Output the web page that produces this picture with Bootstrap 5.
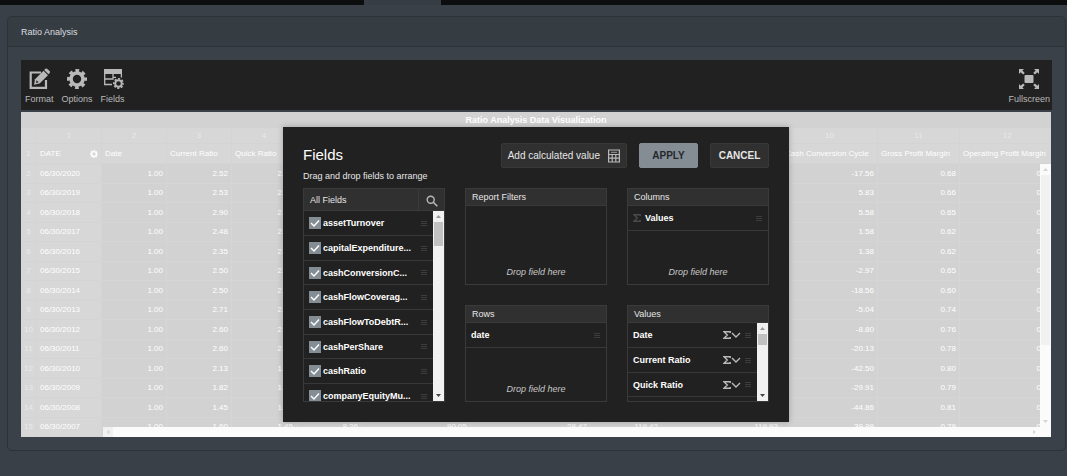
<!DOCTYPE html>
<html lang="en">
<head>
<meta charset="utf-8">
<meta name="viewport" content="width=device-width, initial-scale=1">
<title>Ratio Analysis</title>
<link href="https://cdn.jsdelivr.net/npm/bootstrap@5.3.0/dist/css/bootstrap.min.css" rel="stylesheet">
<style>
:root{--ink:#212121;--line:#3a3a3a;--head:#303030}
body{background:#3a4047;font-family:"Liberation Sans",Arial,sans-serif;font-size:9px;line-height:12px;color:#ddd;overflow:hidden}
button{font-family:inherit}
.topbar{height:5px;background:#0b0d0f}
.topbar a{display:block;width:77px;height:5px;margin-left:364px;background:#363d45}
.report{margin:11px 1px 0 7px;background:#3a4149;border:1px solid #2b3238;border-radius:5px;color:inherit}
.report>.card-header{background:#353c42;border-bottom:1px solid #2b3238;padding:9px 13px;height:30px}
.report>.card-header h1{font-size:9px;line-height:12px;margin:0;font-weight:400;color:#dcdee0}
.report>.card-body{padding:13px}
.tools{background:var(--ink);height:50px;padding:7px 2px 0 4px}
.tool-set{gap:8px}
.tool{background:none;border:0;padding:0;color:#b9b9b9;font-size:9px;line-height:12px;display:flex;flex-direction:column;align-items:center;gap:2px}
.tool svg{width:24px;height:24px}
.pivot{margin:2px 1px 0 0;height:325px;background:#d2d2d2;color:#fff;overflow:hidden}
.caption-row{height:16px;line-height:16px;font-size:9px;font-weight:700;text-align:center}
.sheet{table-layout:fixed;border-collapse:separate;border-spacing:0;width:1035px;font-size:8px;line-height:10px}
.sheet th,.sheet td{padding:0 3px;height:20px;border-right:1px solid #d6d6d6;border-bottom:1px solid #d5d5d5;white-space:nowrap;overflow:hidden;font-weight:400;vertical-align:middle;color:#fff}
.sheet td{text-align:right}
.sheet tbody tr:nth-child(even)>*{height:19px}
.sheet th{background:#d7d7d7;border-color:#d4d4d4}
.sheet .idx th{height:16px;text-align:center;color:#eaeaea}
.sheet th:first-child{text-align:center;color:#eaeaea}
.vbar{position:absolute;right:0;top:52px;bottom:10px;width:11px;background:#fbfbfb}
.hbar{position:absolute;left:82px;right:0;bottom:0;height:10px;background:#fbfbfb}
.pale{background:#f1f1f1}
.bar-col{width:11px;background:#f1f1f1;flex:none}
.bar-col svg{display:block;width:11px;height:11px}
.thumb{width:9px;margin:0 1px;background:#c1c1c1}
.dlg{position:absolute;top:67px;left:0;right:1px;margin:0 auto;width:506px;height:295px;padding:16px 20px 0;background:var(--ink);box-shadow:0 0 6px rgba(0,0,0,.25);color:#e6e6e6}
.dlg h2{font-size:15px;line-height:18px;font-weight:400;color:#fff;margin:3px 0 0}
.dlg-btn{height:25px;border:1px solid #383838;border-radius:2px;background:var(--head);color:#e6e6e6;font-size:10px;line-height:12px;padding:0 6px;white-space:nowrap}
.w-action{width:59px;padding:0;font-weight:700}
.dlg-btn.go{background:#858d94;border-color:#858d94;color:#24282c}
.btn-set{gap:12px}
.trio{display:grid;grid-template-columns:repeat(3,1fr);gap:20px}
.duo{display:grid;gap:20px}
.pane{border:1px solid var(--line);display:flex;flex-direction:column;overflow:hidden}
.pane-title{background:var(--head);height:17px;line-height:16px;padding:0 6px;border-bottom:1px solid var(--line);flex:none;font-size:9px;font-weight:400;margin:0}
.tall{height:97px}
.pane.all{height:214px}
.all .pane-title{height:22px;line-height:22px;padding:0;display:flex}
.all .pane-title span{flex:1;padding-left:6px}
.all .pane-title button{width:26px;border:0;border-left:1px solid var(--line);background:none;padding:0;color:#b9b9b9}
.rows{list-style:none;margin:0;padding:0;overflow:hidden;flex:1}
.rows.short{flex:none}
.rows li{height:25px;border-bottom:1px solid #383838;display:flex;align-items:center;padding:0 6px 0 5px;color:#fff;font-weight:700}
.rows li:nth-child(3n){height:24px}
.rows label{display:flex;align-items:center;gap:2px}
.tick{appearance:none;width:12px;height:12px;margin:0;background:#858d94 url("data:image/svg+xml,%3Csvg xmlns='http://www.w3.org/2000/svg' viewBox='0 0 12 12'%3E%3Cpath d='M2 6l3 3 5-5.5' fill='none' stroke='%23fff' stroke-width='1.4'/%3E%3C/svg%3E")}
.grip{margin-left:auto;width:6px;height:5px;flex:none;color:#3c3c3c}
.hint{margin:auto auto 6px;font-style:italic;color:#c8c8c8}
</style>
</head>
<body>
<nav class="topbar" aria-label="Main"><a href="#" aria-label="Current section"></a></nav>
<svg class="d-none">
  <symbol id="up" viewBox="0 0 11 11"><path d="M3 7l2.5-3L8 7z" fill="currentColor"/></symbol>
  <symbol id="down" viewBox="0 0 11 11"><path d="M3 4l2.5 3L8 4z" fill="currentColor"/></symbol>
  <symbol id="grip" viewBox="0 0 6 5"><path d="M0 .5h6M0 2.5h6M0 4.5h6" stroke="currentColor"/></symbol>
  <symbol id="sigma" viewBox="0 0 8 8"><path d="M7.2 2V.8H1L4.3 4 1 7.2h6.2V6" fill="none" stroke="currentColor" stroke-width="1.4"/></symbol>
  <symbol id="chev" viewBox="0 0 10 8"><path d="M1 2l4 4 4-4" fill="none" stroke="currentColor" stroke-width="1.4"/></symbol>
  <symbol id="cog" viewBox="0 0 20 20"><g fill="none" stroke="currentColor"><circle cx="10" cy="10" r="6" stroke-width="3.6"/><circle cx="10" cy="10" r="8.5" stroke-width="3" stroke-dasharray="3.7 2.976" stroke-dashoffset="1.85"/></g></symbol>
</svg>
<main class="card report">
  <header class="card-header"><h1>Ratio Analysis</h1></header>
  <div class="card-body">
    <div class="position-relative">
      <div class="tools d-flex justify-content-between">
        <div class="d-flex tool-set">
          <button class="tool"><svg viewBox="0 0 24 24"><path d="M14 5.500H3.700v15.300h15.300V13" fill="none" stroke="currentColor" stroke-width="2.200"/><path d="M7 17.800l1-5.600L16.500 3.700l4.500 4.500-8.400 8.400z" fill="currentColor"/><path d="M17.200 3l1.200-1.200q1-.8 2 .1l2.200 2.200q.9 1 .1 2l-1.200 1.200z" fill="currentColor"/><path d="M9 15.900l.6-2.700 2.100 2.100z" fill="#212121"/></svg>Format</button>
          <button class="tool"><svg viewBox="-2 -2 24 24"><use href="#cog" width="20" height="20"/></svg>Options</button>
          <button class="tool"><svg viewBox="0 0 24 24"><path d="M3 2h18v5H3z" fill="currentColor"/><path d="M3.700 7v10.500H11M3.700 12H12V7M20.400 7v3.500M12 10.300h3" fill="none" stroke="currentColor" stroke-width="1.300"/><use href="#cog" x="12" y="11" width="11" height="11"/></svg>Fields</button>
        </div>
        <button class="tool"><svg viewBox="0 0 24 24"><rect x="7.500" y="8" width="9" height="8" rx="1" fill="currentColor"/><path d="M2 2h5L5.400 3.600l2.300 2.300-1.600 1.600-2.400-2.300L2 7zM22 2h-5l1.600 1.600-2.300 2.300 1.600 1.600 2.400-2.300L22 7zM2 22h5l-1.600-1.600 2.300-2.300-1.600-1.600-2.400 2.300L2 17zM22 22h-5l1.600-1.600-2.300-2.300 1.600-1.600 2.400 2.300L22 17z" fill="currentColor"/></svg>Fullscreen</button>
      </div>
      <div class="pivot position-relative">
        <div class="caption-row">Ratio Analysis Data Visualization</div>
        <table class="sheet">
          <colgroup id="cols"></colgroup>
          <thead id="thead"></thead>
          <tbody id="tbody"></tbody>
        </table>
        <div class="vbar d-flex flex-column" style="color:#d5d5d5"><svg width="11" height="11"><use href="#up"/></svg><div class="pale mx-auto" style="width:9px;height:170px"></div><svg class="mt-auto" width="11" height="11"><use href="#down"/></svg></div>
        <div class="hbar d-flex" style="color:#d5d5d5"><svg class="pale" width="10" height="10" viewBox="0 0 11 11"><path d="M7 3L4 5.500 7 8z" fill="currentColor"/></svg><svg class="ms-auto" style="margin-right:11px" width="11" height="10" viewBox="0 0 11 11"><path d="M4 3l3 2.500L4 8z" fill="currentColor"/></svg></div>
      </div>

      <section class="dlg" role="dialog" aria-labelledby="dlgTitle">
        <div class="d-flex btn-set">
          <h2 id="dlgTitle" class="me-auto">Fields</h2>
          <button class="dlg-btn d-flex align-items-center">Add calculated value<svg class="ms-2" width="12" height="14" viewBox="0 0 12 14" fill="none" stroke="#b9b9b9"><path d="M.6 1h10.800v12H.6zM.6 5.500h10.800M.6 9.200h10.800M4.200 5.500V13M7.800 5.500V13" stroke-width="1.200"/><path d="M3 3.300h6" stroke-width=".8"/></svg></button>
          <button class="dlg-btn go w-action">APPLY</button>
          <button class="dlg-btn w-action">CANCEL</button>
        </div>
        <div style="margin:2px 0 6px">Drag and drop fields to arrange</div>
        <div class="trio">
          <section class="pane all">
            <h3 class="pane-title"><span>All Fields</span><button aria-label="Search"><svg width="12" height="12" viewBox="0 0 12 12" fill="none" stroke="currentColor"><circle cx="4.700" cy="4.700" r="3.500" stroke-width="1.400"/><path d="M7.300 7.300l4 4" stroke-width="1.600"/></svg></button></h3>
            <div class="d-flex flex-fill overflow-hidden">
              <ul class="rows" id="all"></ul>
              <div class="bar-col d-flex flex-column"><svg color="#999"><use href="#up"/></svg><div class="thumb" style="height:24px"></div><svg class="mt-auto" color="#444"><use href="#down"/></svg></div>
            </div>
          </section>
          <div class="duo">
            <section class="pane tall"><h3 class="pane-title">Report Filters</h3><div class="hint">Drop field here</div></section>
            <section class="pane tall"><h3 class="pane-title">Rows</h3><ul class="rows short"><li>date<svg class="grip"><use href="#grip"/></svg></li></ul><div class="hint">Drop field here</div></section>
          </div>
          <div class="duo">
            <section class="pane tall"><h3 class="pane-title">Columns</h3><ul class="rows short"><li><svg class="me-1" width="8" height="8" color="#4a4a4a"><use href="#sigma"/></svg>Values<svg class="grip"><use href="#grip"/></svg></li></ul><div class="hint">Drop field here</div></section>
            <section class="pane tall"><h3 class="pane-title">Values</h3>
              <div class="d-flex flex-fill overflow-hidden">
                <ul class="rows" id="vals"></ul>
                <div class="bar-col d-flex flex-column"><svg color="#999"><use href="#up"/></svg><div class="thumb" style="height:11px"></div><svg class="mt-auto" color="#444"><use href="#down"/></svg></div>
              </div>
            </section>
          </div>
        </div>
      </section>
    </div>
  </div>
</main>
<script src="https://cdn.jsdelivr.net/npm/bootstrap@5.3.0/dist/js/bootstrap.bundle.min.js"></script>
<script>
const widths=[16,65,65,65,65,65,109,120,71,120,96,82,96];
const heads=["Date","Current Ratio","Quick Ratio","","","","","","Cash Conversion Cycle","Gross Profit Margin","Operating Profit Margin"];
const c3="2.52 2.53 2.90 2.48 2.35 2.50 2.50 2.71 2.60 2.60 2.13 1.82 1.45 1.60".split(" ");
const c4="2.49 2.50 2.86 2.31 2.32 2.47 2.46 2.66 2.50 2.55 1.98 1.73 1.33 1.45".split(" ");
const c10="-17.56 5.83 5.58 1.58 1.38 -2.97 -18.56 -5.04 -8.80 -20.13 -42.50 -29.91 -44.86 -39.99".split(" ");
const c11="0.68 0.66 0.65 0.62 0.62 0.65 0.60 0.74 0.76 0.78 0.80 0.79 0.81 0.79".split(" ");
const last=["8.26","90.05","28.47","119.42","119.93"];
const $=id=>document.getElementById(id);
$("cols").innerHTML=widths.map(w=>`<col style="width:${w}px">`).join("");
$("thead").innerHTML=`<tr class="idx"><th></th>${Array.from({length:12},(_,i)=>`<th>${i+1}</th>`).join("")}</tr>`+
 `<tr><th>1</th><th><span class="d-flex align-items-center justify-content-between">DATE<svg width="8" height="8"><use href="#cog"/></svg></span></th>${heads.map(h=>`<th>${h}</th>`).join("")}</tr>`;
$("tbody").innerHTML=c3.map((v,i)=>{
  const mid=i===13?last:["","","","",""];
  return `<tr><th>${i+2}</th><th>06/30/${2020-i}</th>`+["1.00",v,c4[i],...mid,c10[i],c11[i],"0.38"].map(x=>`<td>${x}</td>`).join("")+"</tr>";
}).join("");
const grip='<svg class="grip"><use href="#grip"/></svg>';
$("all").innerHTML=["assetTurnover","capitalExpenditure...","cashConversionC...","cashFlowCoverag...","cashFlowToDebtR...","cashPerShare","cashRatio","companyEquityMu..."].map(n=>`<li><label><input type="checkbox" class="tick" checked>${n}</label>${grip}</li>`).join("");
$("vals").innerHTML=["Date","Current Ratio","Quick Ratio"].map(n=>`<li>${n}<svg class="ms-auto" width="8" height="8" color="#b9b9b9"><use href="#sigma"/></svg><svg width="10" height="8" color="#b9b9b9" class="me-1"><use href="#chev"/></svg><svg class="grip m-0"><use href="#grip"/></svg></li>`).join("");
</script>
</body>
</html>
